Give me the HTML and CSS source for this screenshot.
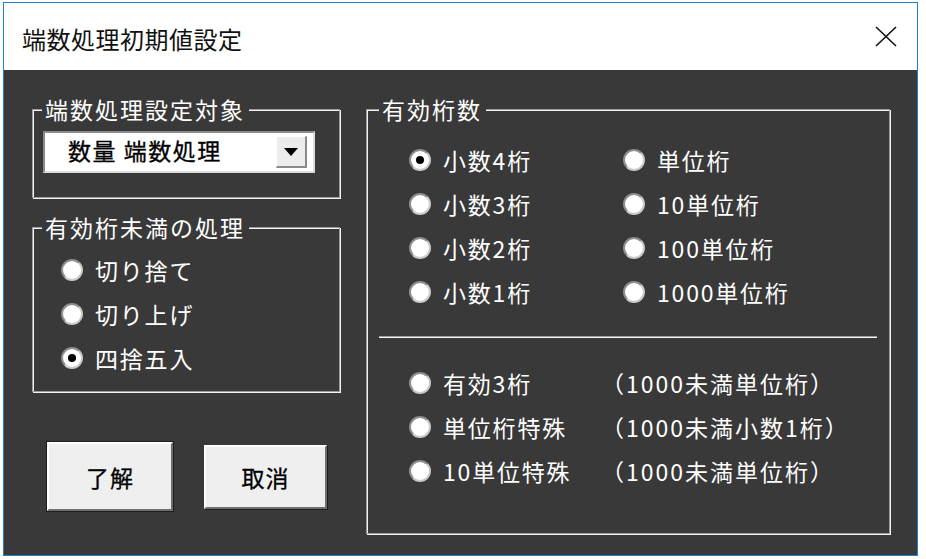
FILE: index.html
```html
<!DOCTYPE html>
<html lang="ja">
<head>
<meta charset="utf-8">
<title>端数処理初期値設定</title>
<link rel="stylesheet" href="styles.css">
</head>
<body>
<div class="window">
  <div class="titlebar">
    <span class="title">端数処理初期値設定</span>
    <svg class="close" width="24" height="21" viewBox="0 0 24 21">
      <path d="M2 1 L22 20 M22 1 L2 20" stroke="#111" stroke-width="1.6" fill="none"/>
    </svg>
  </div>
  <div class="body">
    <div class="left">
      <fieldset class="group g-target">
        <legend>端数処理設定対象</legend>
        <div class="combo">
          <span class="combo-text">数量 端数処理</span>
          <span class="combo-btn"><svg width="14" height="8" viewBox="0 0 14 8"><path d="M0 0 H14 L7 8 Z" fill="#000"/></svg></span>
        </div>
      </fieldset>
      <fieldset class="group g-round">
        <legend>有効桁未満の処理</legend>
        <div class="round-list">
          <label class="opt"><span class="radio"></span><span class="lbl">切り捨て</span></label>
          <label class="opt"><span class="radio"></span><span class="lbl">切り上げ</span></label>
          <label class="opt"><span class="radio checked"></span><span class="lbl">四捨五入</span></label>
        </div>
      </fieldset>
      <div class="buttons">
        <button class="btn btn-default">了解</button>
        <button class="btn">取消</button>
      </div>
    </div>
    <fieldset class="group g-digits">
      <legend>有効桁数</legend>
      <div class="digit-grid">
        <label class="opt"><span class="radio checked"></span><span class="lbl">小数4桁</span></label>
        <label class="opt"><span class="radio"></span><span class="lbl">単位桁</span></label>
        <label class="opt"><span class="radio"></span><span class="lbl">小数3桁</span></label>
        <label class="opt"><span class="radio"></span><span class="lbl">10単位桁</span></label>
        <label class="opt"><span class="radio"></span><span class="lbl">小数2桁</span></label>
        <label class="opt"><span class="radio"></span><span class="lbl">100単位桁</span></label>
        <label class="opt"><span class="radio"></span><span class="lbl">小数1桁</span></label>
        <label class="opt"><span class="radio"></span><span class="lbl">1000単位桁</span></label>
      </div>
      <div class="separator"></div>
      <div class="special-grid">
        <label class="opt"><span class="radio"></span><span class="lbl">有効3桁</span></label>
        <span class="note">（1000未満単位桁）</span>
        <label class="opt"><span class="radio"></span><span class="lbl">単位桁特殊</span></label>
        <span class="note">（1000未満小数1桁）</span>
        <label class="opt"><span class="radio"></span><span class="lbl">10単位特殊</span></label>
        <span class="note">（1000未満単位桁）</span>
      </div>
    </fieldset>
  </div>
</div>
</body>
</html>
```

FILE: styles.css
```css
* { box-sizing: border-box; }

html, body {
  margin: 0;
  padding: 0;
  background: #ffffff;
  font-family: "Noto Sans CJK JP", "Noto Sans", sans-serif;
}

.window {
  margin: 2px 0 0 3px;
  width: 915px;
  height: 554px;
  border: 1px solid #1f7fd0;
  display: flex;
  flex-direction: column;
}

.titlebar {
  height: 67px;
  flex: none;
  background: #ffffff;
  display: flex;
  align-items: center;
  justify-content: space-between;
  padding: 4px 19px 0 18px;
}

.title {
  font-size: 24px;
  letter-spacing: 0.5px;
  line-height: 30px;
  color: #111;
}

.close { display: block; margin-top: -4px; }

.body {
  flex: 1;
  background: #393939;
  display: flex;
  gap: 26px;
  padding: 26px 27px 21px 28px;
  color: #ffffff;
}

.left {
  width: 308px;
  display: flex;
  flex-direction: column;
}

.group {
  margin: 0;
  padding: 0;
  min-width: 0;
  border: 1px solid #9c9c9c;
  box-shadow: inset 1px 1px 0 #f2f2f2, 1px 1px 0 #f2f2f2;
}

.group legend {
  margin-left: 9px;
  padding: 0 4px 0 3px;
  background: #393939;
  font-size: 23px;
  line-height: 26px;
  letter-spacing: 2px;
  color: #ffffff;
}

.g-target {
  padding: 9px 0 24px 0;
}

.combo {
  margin-left: 10px;
  width: 272px;
  height: 42px;
  background: #ffffff;
  border-top: 2px solid #8a8a8a;
  border-left: 2px solid #8a8a8a;
  border-right: 2px solid #dcdcdc;
  border-bottom: 2px solid #dcdcdc;
  display: flex;
  align-items: center;
  justify-content: space-between;
  padding: 0 6px 4px 23px;
}

.combo-text {
  font-size: 23px;
  line-height: 30px;
  letter-spacing: 1.5px;
  color: #000;
  -webkit-text-stroke: 0.3px #000;
}

.combo-btn {
  width: 31px;
  height: 32px;
  margin-top: 4px;
  background: #ececec;
  border-top: 1px solid #ffffff;
  border-left: 1px solid #ffffff;
  border-right: 2px solid #8a8a8a;
  border-bottom: 2px solid #8a8a8a;
  display: flex;
  align-items: center;
  justify-content: center;
}

.combo-btn svg { display: block; }

.g-round {
  margin-top: 16px;
  padding: 8px 0 11px 0;
}

.round-list {
  display: flex;
  flex-direction: column;
  padding-left: 28px;
}

.opt {
  height: 44px;
  display: flex;
  align-items: center;
  gap: 12px;
}

.radio {
  position: relative;
  flex: none;
  width: 22px;
  height: 22px;
  border-radius: 50%;
  background: #ffffff;
  border: 2px solid #8e8e8e;
  border-right-color: #c9c9c9;
  border-bottom-color: #c9c9c9;
}

.radio.checked::after {
  content: "";
  position: absolute;
  left: 5px;
  top: 5px;
  width: 8px;
  height: 8px;
  border-radius: 50%;
  background: #000;
}

.lbl, .note {
  font-size: 23px;
  line-height: 30px;
  letter-spacing: 1.8px;
  color: #ffffff;
  white-space: nowrap;
}

.buttons {
  margin-top: 50px;
  padding-left: 15px;
  display: flex;
  align-items: center;
  gap: 31px;
}

.btn {
  font-family: inherit;
  font-size: 23px;
  letter-spacing: 1px;
  line-height: 30px;
  color: #000;
  -webkit-text-stroke: 0.3px #000;
  background: #efefef;
  border: 2px solid;
  border-color: #ffffff #6f6f6f #6f6f6f #ffffff;
  box-shadow: 1px 1px 0 #1c1c1c;
  width: 123px;
  height: 64px;
  padding: 0;
}

.btn-default {
  width: 126px;
  height: 69px;
  outline: 1px solid #1e1e1e;
}

.g-digits {
  flex: 1;
  padding: 16px 0 0 0;
}

.g-digits legend {
  margin-left: 12px;
}

.digit-grid {
  display: grid;
  grid-template-columns: 214px auto;
  padding-left: 42px;
}

.separator {
  margin: 22px 12px 0 12px;
  border-top: 1px solid #9c9c9c;
  border-bottom: 1px solid #f2f2f2;
}

.special-grid {
  margin-top: 23px;
  padding-left: 42px;
  display: grid;
  grid-template-columns: 192px auto;
  align-items: center;
}

.note {
  height: 44px;
  display: flex;
  align-items: center;
  letter-spacing: 2px;
}
```
